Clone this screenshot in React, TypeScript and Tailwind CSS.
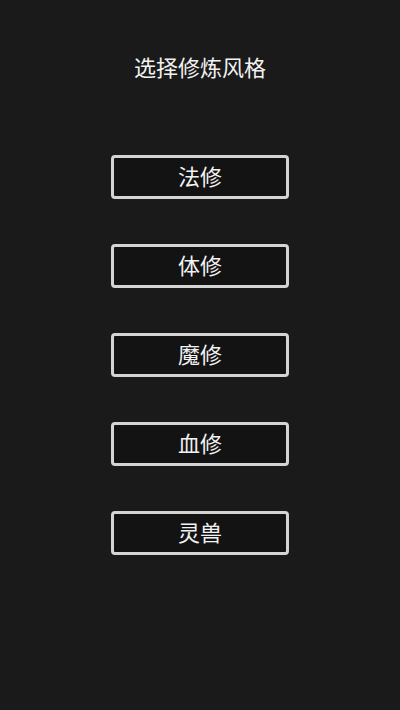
const styles = ['法修', '体修', '魔修', '血修', '灵兽']

export default function App() {
  return (
    <div
      className="w-[400px] h-[710px] bg-[#1a1a1a] text-[#f2f2f2] flex flex-col items-center"
      style={{ fontFamily: '"Noto Sans CJK SC", "Noto Sans", sans-serif' }}
    >
      <h1 className="mt-[52px] text-[22px] leading-[28px] font-normal">选择修炼风格</h1>
      <div className="mt-[75px] flex flex-col gap-[45px]">
        {styles.map((s) => (
          <button
            key={s}
            className="w-[178px] h-[44px] border-[3px] border-[#d4d4d4] rounded-[4px] bg-[#131313] pb-[4px] text-[22px] leading-none text-[#f2f2f2] flex items-center justify-center"
          >
            {s}
          </button>
        ))}
      </div>
    </div>
  )
}
